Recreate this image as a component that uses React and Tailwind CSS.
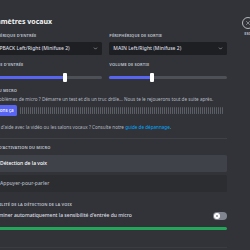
import React from "react";

const Label = ({ children, className = "" }) => (
    <div className={`h-[6px] leading-[6px] text-[4px] font-bold uppercase tracking-[0.1px] text-[#b5bac1] whitespace-nowrap ${className}`}>
        {children}
    </div>
);

const Chevron = () => (
    <svg width="5" height="5" viewBox="0 0 24 24" fill="none" stroke="#b5bac1" strokeWidth="3" strokeLinecap="round" strokeLinejoin="round">
        <path d="M6 9l6 6 6-6" />
    </svg>
);

const Select = ({ value }) => (
    <div className="h-[13px] bg-[#1e1f22] rounded-[1.5px] flex items-center justify-between pl-[4px] pr-[4px]">
        <span className="text-[5px] font-medium text-[#dbdee1] whitespace-nowrap">{value}</span>
        <Chevron />
    </div>
);

const Slider = ({ fill }) => (
    <div className="h-[9px] relative flex items-center">
        <div className="w-full h-[3px] rounded-full bg-[#4e5058] flex">
            <div className="h-full rounded-full bg-[#5865f2]" style={{ width: fill }} />
        </div>
        <div className="absolute top-0 w-[3.5px] h-[9px] rounded-[1px] bg-white" style={{ left: fill - 2 }} />
    </div>
);

const bars = Array.from({ length: 102 });

export default function App() {
    return (
        <div className="w-[250px] h-[250px] overflow-hidden bg-[#313338] flex font-['Noto_Sans',sans-serif]">
            <div className="w-[241.7px] shrink-0 ml-[-15px] pt-[17px] flex flex-col">
                <h1 className="h-[10px] leading-[10px] text-[7px] font-bold text-[#f2f3f5] whitespace-nowrap">Paramètres vocaux</h1>

                <div className="grid grid-cols-2 gap-x-[7px] mt-[6px]">
                    <div>
                        <Label>Périphérique d'entrée</Label>
                        <div className="mt-[3px]"><Select value="LOOPBACK Left/Right (Minifuse 2)" /></div>
                        <Label className="mt-[7px]">Volume d'entrée</Label>
                        <div className="mt-[5px]"><Slider fill={80} /></div>
                    </div>
                    <div>
                        <Label>Périphérique de sortie</Label>
                        <div className="mt-[3px]"><Select value="MAIN Left/Right (Minifuse 2)" /></div>
                        <Label className="mt-[7px]">Volume de sortie</Label>
                        <div className="mt-[5px]"><Slider fill={43} /></div>
                    </div>
                </div>

                <Label className="mt-[6px]">Test du micro</Label>
                <p className="mt-[2px] h-[6px] leading-[6px] text-[4.6px] text-[#b5bac1] whitespace-nowrap">
                    Des problèmes de micro ? Démarre un test et dis un truc drôle... Nous te le rejouerons tout de suite après.
                </p>
                <div className="mt-[3px] flex items-center h-[11px]">
                    <button className="h-[11px] w-[32px] shrink-0 rounded-[1.5px] bg-[#5865f2] text-white text-[4.6px] font-medium whitespace-nowrap">
                        Vérifions ça
                    </button>
                    <div className="ml-[3px] h-[7px] flex gap-px">
                        {bars.map((_, i) => (
                            <div key={i} className="w-px h-full bg-[#5c5e66] rounded-[0.5px]" />
                        ))}
                    </div>
                </div>
                <p className="mt-[8px] h-[6px] leading-[6px] text-[4.6px] text-[#b5bac1] whitespace-nowrap">
                    Besoin d'aide avec la vidéo ou les salons vocaux ? Consulte notre <span className="text-[#00a8fc]">guide de dépannage</span>.
                </p>
                <div className="mt-[8px] h-px bg-[#3f4147]" />

                <Label className="mt-[6px]">Mode d'activation du micro</Label>
                <div className="mt-[4px] h-[17px] rounded-[1.5px] bg-[#404249] flex items-center pl-[3px] gap-[5px]">
                    <div className="w-[7px] h-[7px] rounded-full border border-white flex items-center justify-center">
                        <div className="w-[3px] h-[3px] rounded-full bg-white" />
                    </div>
                    <span className="text-[5px] font-medium text-white whitespace-nowrap">Détection de la voix</span>
                </div>
                <div className="mt-[3px] h-[17px] rounded-[1.5px] bg-[#2b2d31] flex items-center pl-[3px] gap-[5px]">
                    <div className="w-[7px] h-[7px] rounded-full border border-[#b5bac1]" />
                    <span className="text-[5px] font-medium text-[#b5bac1] whitespace-nowrap">Appuyer-pour-parler</span>
                </div>

                <Label className="mt-[10px]">Sensibilité de la détection de la voix</Label>
                <div className="mt-[4px] h-[8px] flex items-center justify-between">
                    <span className="text-[5px] font-medium text-[#dbdee1] whitespace-nowrap">Déterminer automatiquement la sensibilité d'entrée du micro</span>
                    <div className="w-[14px] h-[8px] rounded-full bg-[#80848e] flex items-center pl-[1px]">
                        <div className="w-[6px] h-[6px] rounded-full bg-white flex items-center justify-center">
                            <svg width="4" height="4" viewBox="0 0 24 24" fill="none" stroke="#80848e" strokeWidth="4" strokeLinecap="round">
                                <path d="M7 7l10 10M17 7L7 17" />
                            </svg>
                        </div>
                    </div>
                </div>
                <div className="mt-[7px] h-[2.5px] rounded-full bg-[#23a55a]" />
                <div className="mt-[17px] h-px bg-[#3a3c42]" />
            </div>

            <div className="flex-1 pt-[17px] pl-[15px] flex flex-col items-start">
                <div className="flex flex-col items-center shrink-0 w-[12px]">
                    <div className="w-[12px] h-[12px] shrink-0 rounded-full border border-[#b5bac1] flex items-center justify-center">
                        <svg width="6" height="6" viewBox="0 0 24 24" fill="none" stroke="#b5bac1" strokeWidth="2.5" strokeLinecap="round">
                            <path d="M6 6l12 12M18 6L6 18" />
                        </svg>
                    </div>
                    <span className="mt-[2px] text-[4px] font-bold text-[#b5bac1] leading-[5px]">ESC</span>
                </div>
            </div>
        </div>
    );
}
